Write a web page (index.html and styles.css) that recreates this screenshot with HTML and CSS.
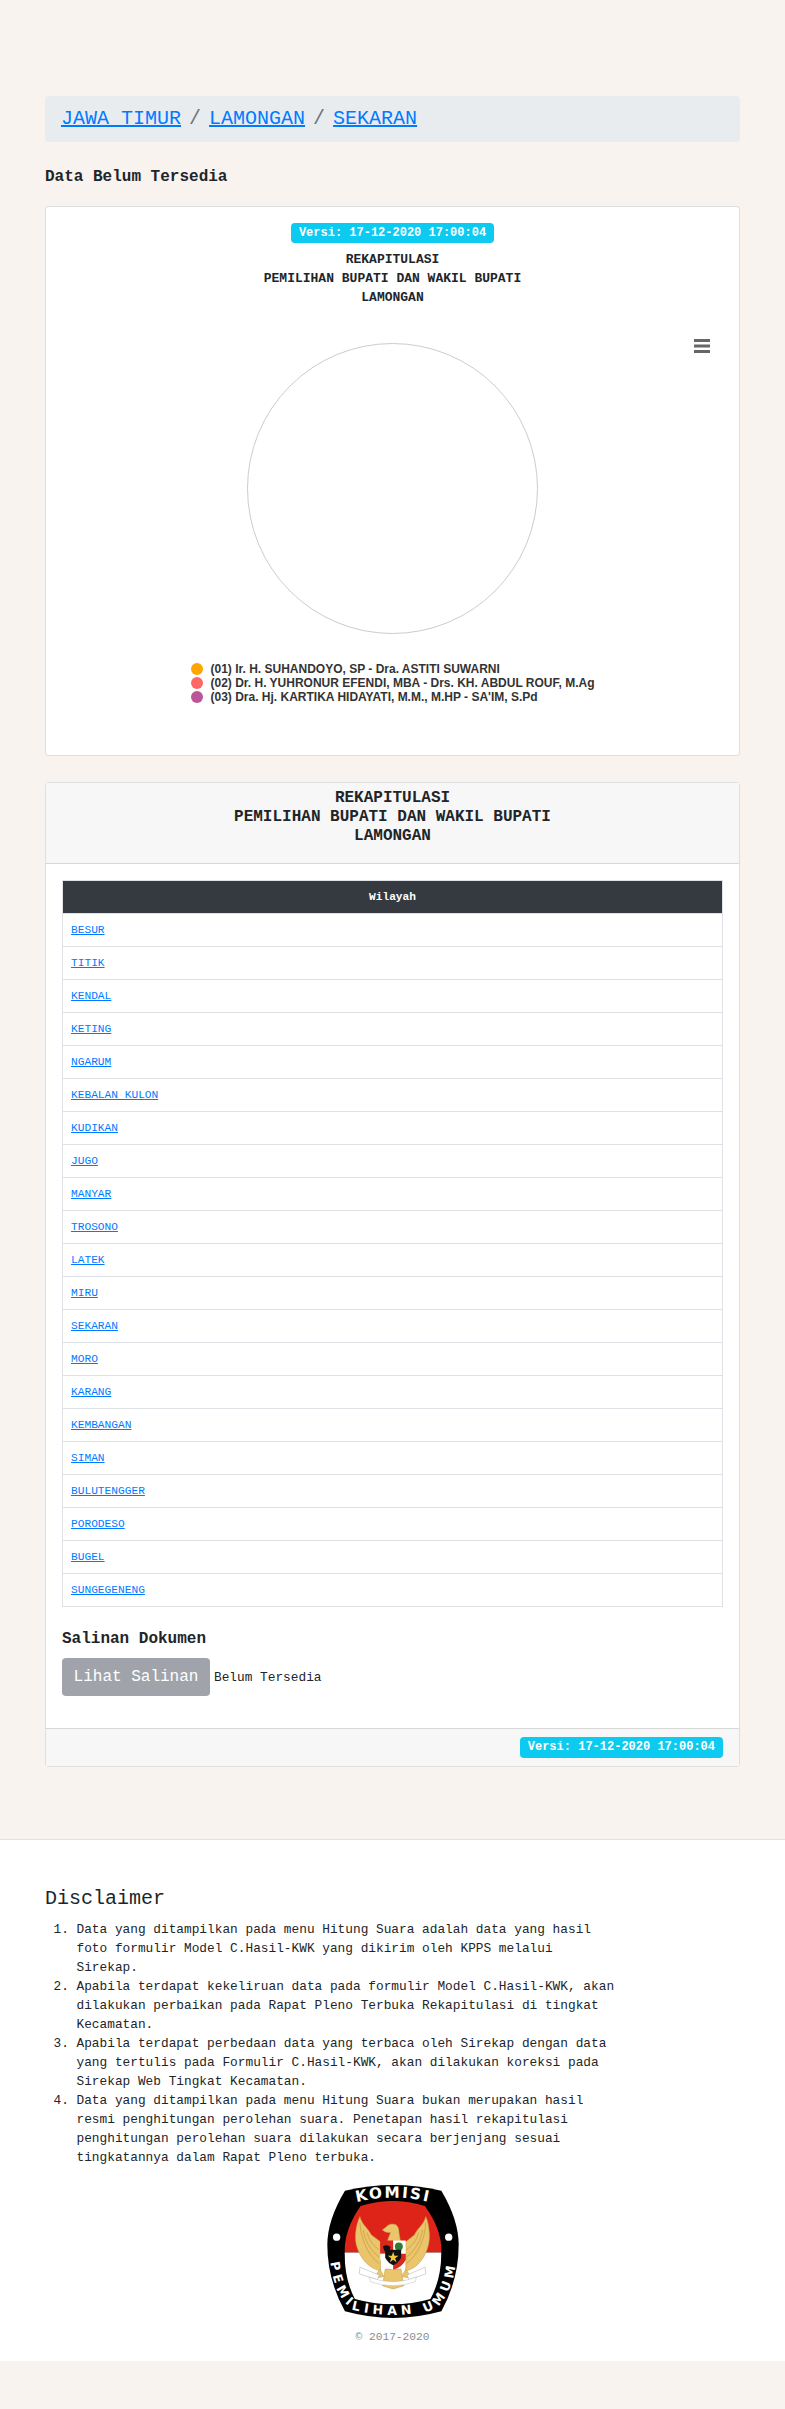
FILE: index.html
```html
<!DOCTYPE html>
<html lang="id">
<head>
<meta charset="utf-8">
<title>Rekapitulasi</title>
<link rel="stylesheet" href="styles.css">
</head>
<body>
<main class="main">
  <nav class="crumbs">
    <a href="#">JAWA TIMUR</a><span class="sep">/</span><a href="#">LAMONGAN</a><span class="sep">/</span><a href="#">SEKARAN</a>
  </nav>
  <h6 class="status">Data Belum Tersedia</h6>
  <section class="card chart-card">
    <span class="badge">Versi: 17-12-2020 17:00:04</span>
    <div class="chart-title">REKAPITULASI<br>PEMILIHAN BUPATI DAN WAKIL BUPATI<br>LAMONGAN</div>
    <div class="chart">
      <svg class="menu-icon" width="18" height="14" viewBox="0 0 18 14" aria-hidden="true">
        <path d="M1 1.5H17M1 7H17M1 12.5H17" stroke="#666" stroke-width="3"/>
      </svg>
      <div class="pie"></div>
      <ul class="legend">
        <li><i class="dot dot-a"></i>(01) Ir. H. SUHANDOYO, SP - Dra. ASTITI SUWARNI</li>
        <li><i class="dot dot-b"></i>(02) Dr. H. YUHRONUR EFENDI, MBA - Drs. KH. ABDUL ROUF, M.Ag</li>
        <li><i class="dot dot-c"></i>(03) Dra. Hj. KARTIKA HIDAYATI, M.M., M.HP - SA'IM, S.Pd</li>
      </ul>
    </div>
  </section>
  <section class="card table-card">
    <header class="card-head">REKAPITULASI<br>PEMILIHAN BUPATI DAN WAKIL BUPATI<br>LAMONGAN</header>
    <div class="card-body">
      <table class="regions">
        <thead><tr><th>Wilayah</th></tr></thead>
        <tbody>
          <tr><td><a href="#">BESUR</a></td></tr>
          <tr><td><a href="#">TITIK</a></td></tr>
          <tr><td><a href="#">KENDAL</a></td></tr>
          <tr><td><a href="#">KETING</a></td></tr>
          <tr><td><a href="#">NGARUM</a></td></tr>
          <tr><td><a href="#">KEBALAN KULON</a></td></tr>
          <tr><td><a href="#">KUDIKAN</a></td></tr>
          <tr><td><a href="#">JUGO</a></td></tr>
          <tr><td><a href="#">MANYAR</a></td></tr>
          <tr><td><a href="#">TROSONO</a></td></tr>
          <tr><td><a href="#">LATEK</a></td></tr>
          <tr><td><a href="#">MIRU</a></td></tr>
          <tr><td><a href="#">SEKARAN</a></td></tr>
          <tr><td><a href="#">MORO</a></td></tr>
          <tr><td><a href="#">KARANG</a></td></tr>
          <tr><td><a href="#">KEMBANGAN</a></td></tr>
          <tr><td><a href="#">SIMAN</a></td></tr>
          <tr><td><a href="#">BULUTENGGER</a></td></tr>
          <tr><td><a href="#">PORODESO</a></td></tr>
          <tr><td><a href="#">BUGEL</a></td></tr>
          <tr><td><a href="#">SUNGEGENENG</a></td></tr>
        </tbody>
      </table>
      <h6 class="docs-title">Salinan Dokumen</h6>
      <div class="docs-row">
        <span class="btn">Lihat Salinan</span>
        <span class="docs-note">Belum Tersedia</span>
      </div>
    </div>
    <footer class="card-foot"><span class="badge badge-foot">Versi: 17-12-2020 17:00:04</span></footer>
  </section>
</main>
<footer class="site-foot">
  <h5 class="disc-title">Disclaimer</h5>
  <ol class="disc-list">
    <li>Data yang ditampilkan pada menu Hitung Suara adalah data yang hasil foto formulir Model C.Hasil-KWK yang dikirim oleh KPPS melalui Sirekap.</li>
    <li>Apabila terdapat kekeliruan data pada formulir Model C.Hasil-KWK, akan dilakukan perbaikan pada Rapat Pleno Terbuka Rekapitulasi di tingkat Kecamatan.</li>
    <li>Apabila terdapat perbedaan data yang terbaca oleh Sirekap dengan data yang tertulis pada Formulir C.Hasil-KWK, akan dilakukan koreksi pada Sirekap Web Tingkat Kecamatan.</li>
    <li>Data yang ditampilkan pada menu Hitung Suara bukan merupakan hasil resmi penghitungan perolehan suara. Penetapan hasil rekapitulasi penghitungan perolehan suara dilakukan secara berjenjang sesuai tingkatannya dalam Rapat Pleno terbuka.</li>
  </ol>
  <svg class="logo" width="132" height="135" viewBox="82 42 395 406" role="img" aria-label="Logo KPU">
    <defs>
      <clipPath id="inner"><path d="M182 108Q280 78 375 108Q428 180 425 250Q424 330 392 388Q280 420 165 388Q134 330 134 250Q132 180 182 108Z"/></clipPath>
    </defs>
    <path d="M135 62Q280 28 425 62Q477 150 477 225Q477 330 425 425Q280 465 135 425Q82 330 82 225Q82 150 135 62Z" fill="#000"/>
    <g clip-path="url(#inner)">
      <rect x="120" y="70" width="320" height="178" fill="#de2418"/>
      <rect x="120" y="248" width="320" height="180" fill="#fff"/>
    </g>
    <circle cx="110" cy="202" r="11" fill="#fff"/>
    <circle cx="447" cy="202" r="11" fill="#fff"/>
    <path id="arcTop" d="M160 99Q280 67 400 99" fill="none"/>
    <path id="arcBottom" d="M90 266C98 350 128 410 170 423Q280 448 390 423C432 410 462 350 470 266" fill="none"/>
    <text class="logo-top"><textPath href="#arcTop" startOffset="50%" text-anchor="middle">KOMISI</textPath></text>
    <text class="logo-bottom"><textPath href="#arcBottom" startOffset="50%" text-anchor="middle">PEMILIHAN UMUM</textPath></text>
    <g fill="#eac56c" stroke="#c4973c" stroke-width="1.5">
      <path d="M180 140C186 165 205 175 214 195L242 216V304L226 298C190 282 162 235 167 190C169 170 173 155 180 140Z"/>
      <path d="M378 140C372 165 353 175 344 195L318 216V304L334 298C368 282 392 235 389 190C387 170 385 155 378 140Z"/>
      <path d="M247 180L258 172Q270 158 288 164Q298 172 298 190L302 214H262L272 188Q258 190 247 180Z"/>
      <path d="M240 298L222 326L252 320ZM318 298L336 326L306 320Z"/>
      <path d="M256 298H304L312 348L280 358L248 348Z"/>
    </g>
    <path d="M180 158C182 200 198 250 238 282M190 180C194 210 210 240 238 262M202 188C206 210 220 226 238 240M378 158C376 200 360 250 320 282M368 180C364 210 348 240 320 262M356 188C352 210 338 226 320 240" fill="none" stroke="#c4973c" stroke-width="2"/>
    <path d="M180 292L238 316L232 330L178 312ZM376 292L322 316L328 330L378 312Z" fill="#fff" stroke="#aaa" stroke-width="1.5"/>
    <path d="M208 322Q280 350 350 322L346 336Q280 360 212 336Z" fill="#fff" stroke="#999" stroke-width="1"/>
    <rect x="241" y="212" width="39" height="40" fill="#d9281e"/>
    <rect x="280" y="212" width="38" height="40" fill="#fff"/>
    <path d="M241 252H280V300Q254 294 241 270Z" fill="#fff"/>
    <path d="M280 252H318V270Q306 294 280 300Z" fill="#d9281e"/>
    <circle cx="297" cy="230" r="12" fill="#2f7d32"/>
    <path d="M249 230Q262 222 272 232L268 244H254Z" fill="#111"/>
    <path d="M256 240H304V264Q294 282 280 286Q266 282 256 264Z" fill="#111"/>
    <path d="M280 246L284 258H296L286 265L290 277L280 270L270 277L274 265L264 258H276Z" fill="#f5c542"/>
  </svg>
  <p class="copy">© 2017-2020</p>
</footer>
</body>
</html>
```
FILE: styles.css
```css
* { box-sizing: border-box; }
html, body { margin: 0; padding: 0; }
body {
  background: #f8f3ef;
  color: #212529;
  font-family: "Liberation Mono", monospace;
  min-height: 2409px;
}
a { color: #007bff; text-decoration: underline; }
.main { padding: 96px 45px 0; }
.crumbs {
  background: #e9ecef;
  border-radius: 4px;
  padding: 8px 16px;
  font-size: 20px;
  line-height: 30px;
  height: 46px;
}
.sep { color: #6c757d; padding: 0 8px; }
.status {
  margin: 26px 0 19px;
  font-size: 16px;
  line-height: 19px;
  font-weight: 700;
}
.card {
  background: #fff;
  border: 1px solid rgba(0,0,0,.125);
  border-radius: 4px;
}
.chart-card {
  height: 550px;
  padding-top: 16px;
  text-align: center;
}
.badge {
  display: inline-block;
  background: #0dcaf0;
  color: #fff;
  border-radius: 4px;
  font-size: 12px;
  font-weight: 700;
  line-height: 14px;
  padding: 3px 8px;
  vertical-align: top;
}
.chart-title {
  margin-top: 7px;
  font-size: 13px;
  font-weight: 700;
  line-height: 19px;
}
.chart { position: relative; padding-top: 36px; }
.menu-icon { position: absolute; top: 32px; right: 28px; }
.pie {
  width: 291px;
  height: 291px;
  margin: 0 auto;
  border: 1px solid #ccc;
  border-radius: 50%;
}
.legend {
  list-style: none;
  margin: 28px 0 0;
  padding: 0 0 0 1px;
  display: inline-flex;
  flex-direction: column;
  text-align: left;
  font: 700 12px/14px "Liberation Sans", Arial, sans-serif;
  color: #333;
}
.legend li { display: flex; align-items: center; gap: 7px; }
.dot { width: 12px; height: 12px; border-radius: 50%; flex: none; }
.dot-a { background: #ffa500; }
.dot-b { background: #ff6666; }
.dot-c { background: #bb5599; }
.table-card { margin-top: 26px; }
.card-head {
  background: #f7f7f7;
  border-bottom: 1px solid rgba(0,0,0,.125);
  padding: 6px 16px 17px;
  text-align: center;
  font-size: 16px;
  font-weight: 700;
  line-height: 19px;
  height: 81px;
}
.card-body { padding: 16px 16px 32px; }
.regions {
  width: 100%;
  border-collapse: collapse;
  font-size: 11.2px;
  line-height: 16px;
}
.regions th, .regions td {
  border: 1px solid #dee2e6;
  padding: 8px;
  text-align: left;
}
.regions th {
  background: #343a40;
  color: #fff;
  text-align: center;
  font-weight: 700;
}
.docs-title {
  margin: 23px 0 9px;
  font-size: 16px;
  font-weight: 700;
  line-height: 19px;
}
.docs-row { display: flex; align-items: center; gap: 4px; }
.btn {
  background: #a0a4aa;
  color: #fff;
  border-radius: 4px;
  font-size: 16px;
  line-height: 38px;
  height: 38px;
  width: 148px;
  text-align: center;
}
.docs-note { font-size: 12.8px; line-height: 19px; color: #212529; }
.card-foot {
  background: #f7f7f7;
  border-top: 1px solid rgba(0,0,0,.125);
  padding: 8px 16px 8px;
  text-align: right;
  height: 38px;
}
.badge-foot { padding: 3px 8px 4px; }
.site-foot {
  margin-top: 72px;
  background: #fff;
  border-top: 1px solid #dee2e6;
  padding: 47px 45px 0;
  height: 522px;
}
.disc-title {
  margin: 0 0 8.5px;
  font-size: 20px;
  font-weight: 400;
  line-height: 24px;
}
.disc-list {
  margin: 0;
  padding: 0 0 0 31.5px;
  width: 572px;
  font-size: 12.8px;
  line-height: 19px;
}
.logo { display: block; margin: 17.5px auto 0; overflow: visible; }
.copy {
  margin: 10px 0 0;
  text-align: center;
  font-size: 11.2px;
  line-height: 17px;
  color: #868e96;
}
.logo-top { font: 700 46px "DejaVu Sans", sans-serif; fill: #fff; letter-spacing: 6px; }
.logo-bottom { font: 700 38px "DejaVu Sans", sans-serif; fill: #fff; letter-spacing: 13px; }
```
